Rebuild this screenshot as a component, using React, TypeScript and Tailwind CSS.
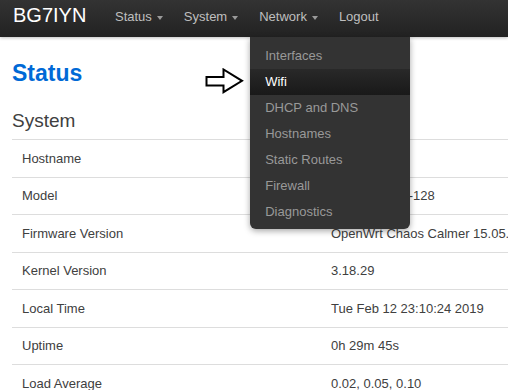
import React from "react";

const menu = ["Status", "System", "Network"];

const dropItems = [
  "Interfaces",
  "Wifi",
  "DHCP and DNS",
  "Hostnames",
  "Static Routes",
  "Firewall",
  "Diagnostics",
];

const rows = [
  ["Hostname", "BG7IYN"],
  ["Model", "ZBT WE1326-128"],
  ["Firmware Version", "OpenWrt Chaos Calmer 15.05.1 r49389"],
  ["Kernel Version", "3.18.29"],
  ["Local Time", "Tue Feb 12 23:10:24 2019"],
  ["Uptime", "0h 29m 45s"],
  ["Load Average", "0.02, 0.05, 0.10"],
];

function Caret() {
  return (
    <span className="ml-[5px] mt-[1px] inline-block w-0 h-0 border-l-[3px] border-r-[3px] border-t-[4px] border-l-transparent border-r-transparent border-t-[#9a9a9a]" />
  );
}

export default function App() {
  return (
    <div className="relative w-full h-[390px] overflow-hidden bg-white font-['Liberation_Sans',Arial,sans-serif] text-[#404040]">
      {/* top bar */}
      <div className="relative z-20 flex h-[37px] items-stretch bg-linear-to-b from-[#333] to-[#222] shadow-[0_1px_3px_rgba(0,0,0,0.25)]">
        <div className="w-[115px] pl-[13px] flex items-center pb-[7px] text-[20px] text-white">
          BG7IYN
        </div>
        <ul className="flex items-stretch gap-[21px] text-[13px] text-[#bfbfbf]">
          {menu.map((m) => (
            <li key={m} className="relative flex items-center pb-[3px]">
              {m}
              <Caret />
              {m === "Network" && (
                <div className="absolute left-[-9px] top-full w-[160px] pt-[6px] pb-[4px] bg-[#333] rounded-b-[6px] shadow-[0_2px_6px_rgba(0,0,0,0.35)]">
                  {dropItems.map((d) => (
                    <div
                      key={d}
                      className={
                        d === "Wifi"
                          ? "h-[26px] pl-[15px] flex items-center bg-linear-to-b from-[#292929] to-[#191919] text-white"
                          : "h-[26px] pl-[15px] flex items-center text-[#999]"
                      }
                    >
                      {d}
                    </div>
                  ))}
                </div>
              )}
            </li>
          ))}
          <li className="flex items-center pb-[3px]">Logout</li>
        </ul>
      </div>

      {/* pointer arrow */}
      <svg
        className="absolute left-[205px] top-[68px] z-10"
        width="39"
        height="26"
        viewBox="0 0 39 26"
      >
        <path
          d="M1.5 9 H18.5 V1.5 L37 12.8 L18.5 24.2 V17.5 H1.5 Z"
          fill="white"
          stroke="black"
          strokeWidth="2"
          strokeLinejoin="miter"
        />
      </svg>

      <div className="pl-[12px]">
        <h2 className="mt-[22px] text-[23px] leading-[28px] font-bold text-[#0069d6]">
          Status
        </h2>
        <h3 className="mt-[22px] text-[19px] leading-[24px] text-[#404040]">
          System
        </h3>
        <div className="mt-[6px] w-[900px] text-[13px]">
          {rows.map(([k, v]) => (
            <div
              key={k}
              className="flex items-center h-[37.5px] border-t border-[#ddd] whitespace-nowrap"
            >
              <div className="w-[319px] pl-[10px]">{k}</div>
              <div>{v}</div>
            </div>
          ))}
        </div>
      </div>
    </div>
  );
}
